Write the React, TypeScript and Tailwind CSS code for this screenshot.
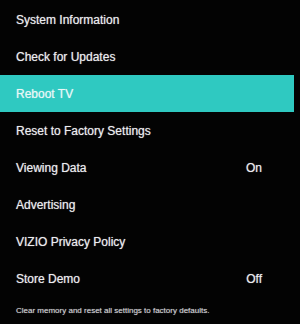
import React from 'react';

interface MenuItem {
  label: string;
  value?: string;
}

const items: MenuItem[] = [
  { label: 'System Information' },
  { label: 'Check for Updates' },
  { label: 'Reboot TV' },
  { label: 'Reset to Factory Settings' },
  { label: 'Viewing Data', value: 'On' },
  { label: 'Advertising' },
  { label: 'VIZIO Privacy Policy' },
  { label: 'Store Demo', value: 'Off' },
];

const App = () => {
  const selected = 2;

  return (
    <div className="w-[300px] h-[324px] bg-[#030303] overflow-hidden pt-[1px] font-['Liberation_Sans',Arial,sans-serif]">
      <ul className="w-[294px]">
        {items.map((item, i) => (
          <li
            key={item.label}
            className={`h-[37px] flex items-center justify-between pl-4 pr-8 text-[12px] [text-shadow:0_0_1px_rgba(255,255,255,0.6)] ${
              i === selected ? 'bg-[#2fc9c1] text-[#eaf7f6]' : 'text-[#ececf0]'
            }`}
          >
            <span>{item.label}</span>
            {item.value && <span>{item.value}</span>}
          </li>
        ))}
      </ul>
      <p className="pl-4 pt-2 text-[8px] text-[#cfcfd4] [text-shadow:0_0_1px_rgba(255,255,255,0.5)]">
        Clear memory and reset all settings to factory defaults.
      </p>
    </div>
  );
};

export default App;
